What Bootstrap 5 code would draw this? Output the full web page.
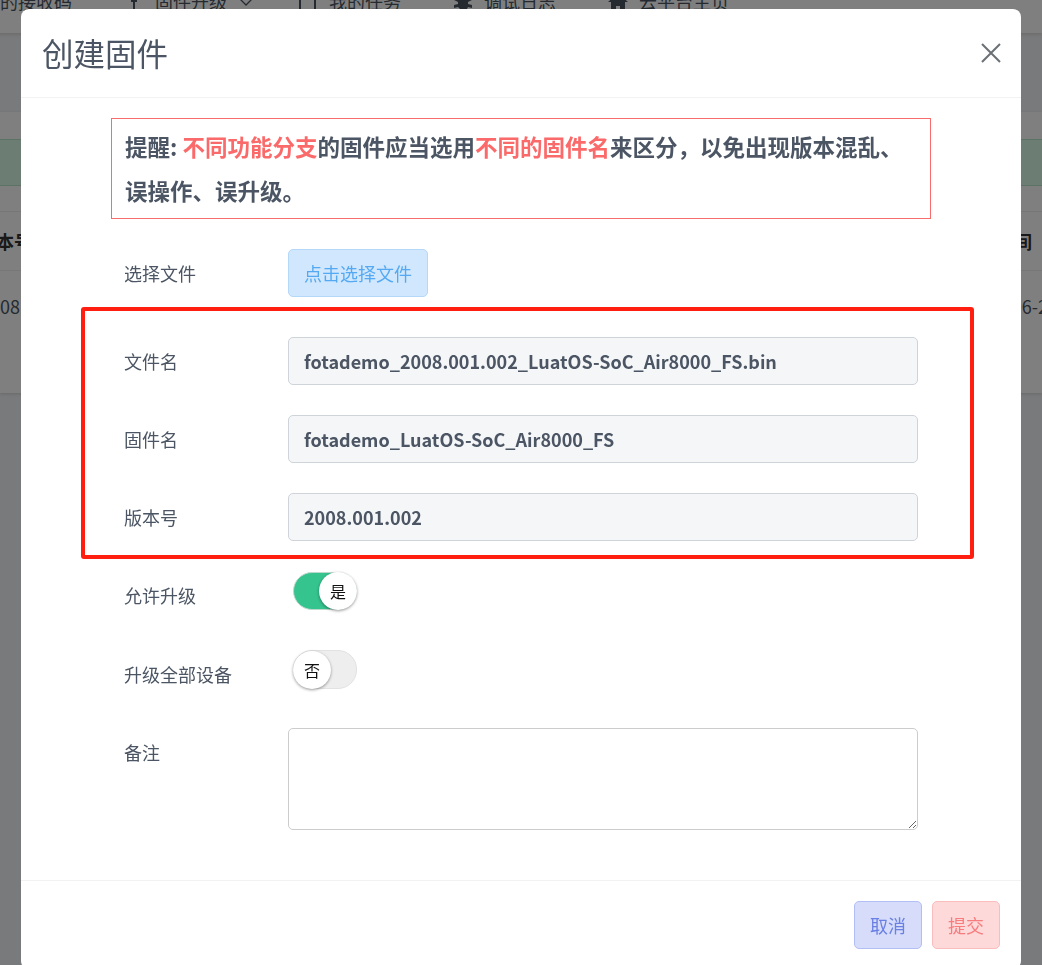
<!DOCTYPE html>
<html lang="zh-CN">
<head>
<meta charset="utf-8">
<title>创建固件</title>
<link href="https://cdn.jsdelivr.net/npm/bootstrap@5.3.0/dist/css/bootstrap.min.css" rel="stylesheet">
<style>
html,body{height:965px;overflow:hidden}
body{font-family:"Noto Sans CJK SC","Liberation Sans",sans-serif;background:#f3f4f6;color:#4b5563;font-size:18px}
.page-shift{margin-top:-30px;overflow:hidden;height:995px}
.top-nav{height:63px;background:#fff;box-shadow:0 1px 4px rgba(0,0,0,.15);margin-left:-18px}
.nav-ic{width:20px;height:20px;margin-right:11px;fill:#4b5563}
.top-item{margin-right:52px;white-space:nowrap}
.top-item.menu-item{margin-right:45px}
.caret-ic{margin-left:12px}
.bg-card{margin-top:79px;height:281px;background:#fff;box-shadow:0 1px 3px rgba(0,0,0,.15);padding-top:27px}
.bg-alert{height:47px;background:#d8fde8;border-top:1px solid #b9e4cb;border-bottom:1px solid #b9e4cb}
.bg-head{height:60px;margin-top:25px;border-top:1px solid #eee;border-bottom:1px solid #eee;padding:0 10px;margin-left:-32px;font-weight:700;color:#333}
.bg-row{height:70px;margin-left:-20px;margin-right:-65px;line-height:70px;color:#4b5563}
.modal.fw-modal{overflow:hidden;display:block}
.fw-modal .modal-dialog{max-width:1000px;width:1000px;margin:9px 0 0 21px}
.fw-modal .modal-content{border-radius:8px;border:0}
.fw-modal .modal-header{height:89px;padding:0 20px 0 21px;border-bottom:1px solid #f2f2f2}
.fw-title{font-size:31.5px;font-weight:400;color:#4b5563;line-height:1}
.fw-close{width:20px;height:20px;stroke:#6b7076;stroke-width:2;fill:none}
.fw-modal .modal-body{padding:20px 103px 50px 103px}
.warn-box{margin:0 -13px 30px;border:1px solid #f76c6c;padding:5px 20px 6px 13px;font-size:22.5px;font-weight:700;line-height:44px;color:#4b5563}
.warn-hot{color:#fb6a6a}
.form-line{display:flex;margin-bottom:30px;min-height:48px}
.form-line.first-line{margin-bottom:40px}
.form-line.tight-line label{padding-top:1px}
.form-line label{width:164px;flex:none;line-height:48px;font-size:18px;color:#4b5563}
.fw-input.form-control{height:48px;font-size:18px;font-weight:700;color:#4b5563;background:#f5f6f8;border-color:#ced4da;padding:0 15px;border-radius:5px}
.fw-area.form-control{height:102px;border-color:#ccc;border-radius:5px}
.pick-btn.btn{height:48px;padding:0 15px;font-size:18px;color:#54a9f2;background:#d1e7fd;border:1px solid #b5d8f9;border-radius:5px}
.fw-switch{width:64px;height:38px;border-radius:19px;margin:1px 0 0 5px;display:flex;align-items:center;font-size:16px;color:#111}
.fw-switch.on{background:#35c38e;border:1px solid #bcd9cd;justify-content:flex-end}
.fw-switch.off{background:#eee;border:1px solid #e2e2e2;height:39px}
.fw-knob{width:38px;height:38px;border-radius:50%;background:#fff;box-shadow:0 1px 3px rgba(0,0,0,.4);display:flex;align-items:center;justify-content:center;flex:none}
.fw-switch.on .fw-knob{margin-right:-1px}
.fw-switch.off .fw-knob{margin-left:-1px}
.fw-modal .modal-footer{padding:20px 21px;border-top:1px solid #f2f2f2;gap:10px;justify-content:flex-end}
.fw-modal .modal-footer>.btn{margin:0;width:68px;height:48px;padding:0;font-size:18px;border-radius:5px}
.btn-soft-blue{background:#d6dcfa;border:1px solid #b2bff5;color:#6a80e3}
.btn-soft-red{background:#fdd9da;border:1px solid #fbbcbd;color:#f87c7e}
.red-frame{position:absolute;left:60px;top:209px;width:893px;height:252px;border:4px solid #ff1e10;border-radius:3px;pointer-events:none}
</style>
</head>
<body>
<div class="page-shift">
  <nav class="top-nav d-flex align-items-center">
    <span class="top-item">我的接收码</span>
    <span class="top-item menu-item d-flex align-items-center"><svg class="nav-ic" viewBox="0 0 20 20"><path d="M10 1 3 8h4v2h2v10h2V10h2V8h4z"/></svg>固件升级<svg class="caret-ic" width="14" height="8" viewBox="0 0 14 8" fill="none" stroke="#4b5563" stroke-width="1.3"><path d="M1 1l6 6 6-6"/></svg></span>
    <span class="top-item d-flex align-items-center"><svg class="nav-ic" viewBox="0 0 20 20"><path fill-rule="evenodd" d="M1 1h17v18H1zM3 3v14h13V3z"/></svg>我的任务</span>
    <span class="top-item d-flex align-items-center"><svg class="nav-ic" viewBox="0 0 20 20"><path d="M6 4h8l1 3 4-2v3l-4 2v2l4 1v3l-4-1-1 2 3 2H4l3-2-2-2-4 1v-3l4-1v-2L1 8V5l4 2z"/></svg>调试日志</span>
    <span class="top-item d-flex align-items-center"><svg class="nav-ic" viewBox="0 0 20 20"><path d="M10 1 0 10h3v10h5v-6h4v6h5V10h3z"/></svg>云平台主页</span>
  </nav>
  <div class="bg-card">
    <div class="bg-alert"></div>
    <div class="bg-head d-flex justify-content-between align-items-center"><span>版本号</span><span>创建时间</span></div>
    <div class="bg-row d-flex justify-content-between"><span>2008.001.002</span><span>2025-06-20 10:00</span></div>
  </div>
</div>

<div class="modal-backdrop show"></div>
<div class="modal fw-modal" tabindex="-1">
  <div class="modal-dialog">
    <div class="modal-content">
      <div class="modal-header">
        <h5 class="fw-title mb-0">创建固件</h5>
        <svg class="fw-close" viewBox="0 0 20 20"><path d="M1 1l18 18M19 1 1 19"/></svg>
      </div>
      <div class="modal-body">
        <div class="warn-box">提醒: <span class="warn-hot">不同功能分支</span>的固件应当选用<span class="warn-hot">不同的固件名</span>来区分，以免出现版本混乱、误操作、误升级。</div>
        <div class="form-line first-line"><label>选择文件</label><button type="button" class="btn pick-btn">点击选择文件</button></div>
        <div class="form-line"><label>文件名</label><input class="form-control fw-input" readonly value="fotademo_2008.001.002_LuatOS-SoC_Air8000_FS.bin"></div>
        <div class="form-line"><label>固件名</label><input class="form-control fw-input" readonly value="fotademo_LuatOS-SoC_Air8000_FS"></div>
        <div class="form-line"><label>版本号</label><input class="form-control fw-input" readonly value="2008.001.002"></div>
        <div class="form-line"><label>允许升级</label><div class="fw-switch on"><span class="fw-knob">是</span></div></div>
        <div class="form-line tight-line"><label>升级全部设备</label><div class="fw-switch off"><span class="fw-knob">否</span></div></div>
        <div class="form-line mb-0"><label>备注</label><textarea class="form-control fw-area"></textarea></div>
        <div class="red-frame"></div>
      </div>
      <div class="modal-footer">
        <button type="button" class="btn btn-soft-blue">取消</button>
        <button type="button" class="btn btn-soft-red">提交</button>
      </div>
    </div>
  </div>
</div>
<script src="https://cdn.jsdelivr.net/npm/bootstrap@5.3.0/dist/js/bootstrap.bundle.min.js"></script>
</body>
</html>
